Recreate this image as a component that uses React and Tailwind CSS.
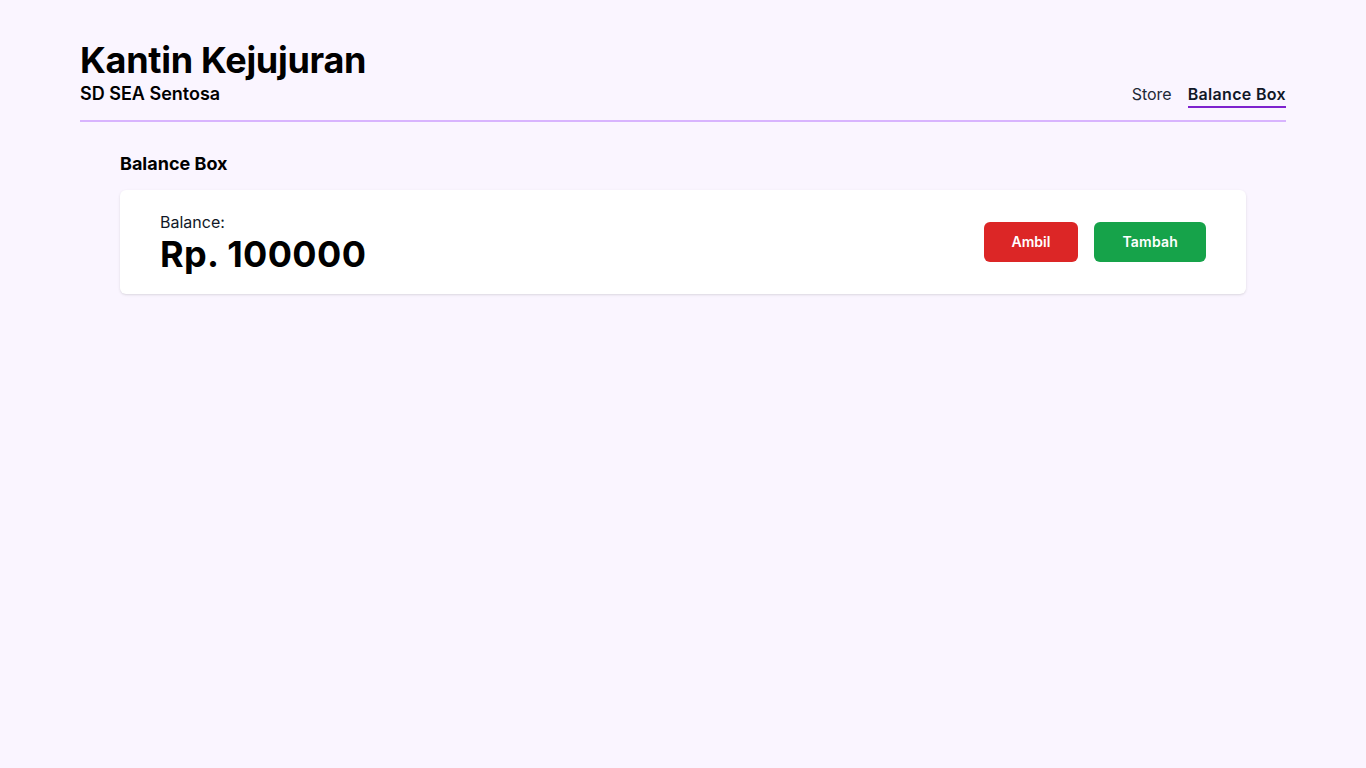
export default function App() {
  return (
    <div
      className="min-h-screen bg-[#faf5ff] px-20 text-black"
      style={{ fontFamily: "Inter, 'Noto Sans', sans-serif" }}
    >
      <header className="flex items-end justify-between border-b-2 border-[#d8b4fe] pt-10 pb-3">
        <div>
          <h1 className="text-4xl font-bold leading-10 tracking-[-0.008em]">Kantin Kejujuran</h1>
          <p className="text-lg font-semibold leading-7">SD SEA Sentosa</p>
        </div>
        <nav className="flex items-end gap-4 text-base">
          <a className="border-b-2 border-transparent text-[#1f2937]" href="#">Store</a>
          <a className="border-b-2 border-[#7e22ce] font-semibold tracking-[0.02em] text-[#111827]" href="#">Balance Box</a>
        </nav>
      </header>

      <main className="px-10 pt-7">
        <h2 className="mb-3 text-lg font-bold leading-7">Balance Box</h2>
        <div className="flex items-center justify-between rounded-md bg-white px-10 py-5 shadow">
          <div>
            <p className="text-base leading-6 text-[#111827]">Balance:</p>
            <p className="text-4xl font-bold leading-10 tracking-[0.01em]">Rp. 100000</p>
          </div>
          <div className="flex gap-4">
            <button className="h-10 rounded-md bg-[#dc2626] px-7 text-sm font-semibold text-white">Ambil</button>
            <button className="h-10 rounded-md bg-[#16a34a] px-7 text-sm font-semibold tracking-[0.015em] text-white">Tambah</button>
          </div>
        </div>
      </main>
    </div>
  )
}
